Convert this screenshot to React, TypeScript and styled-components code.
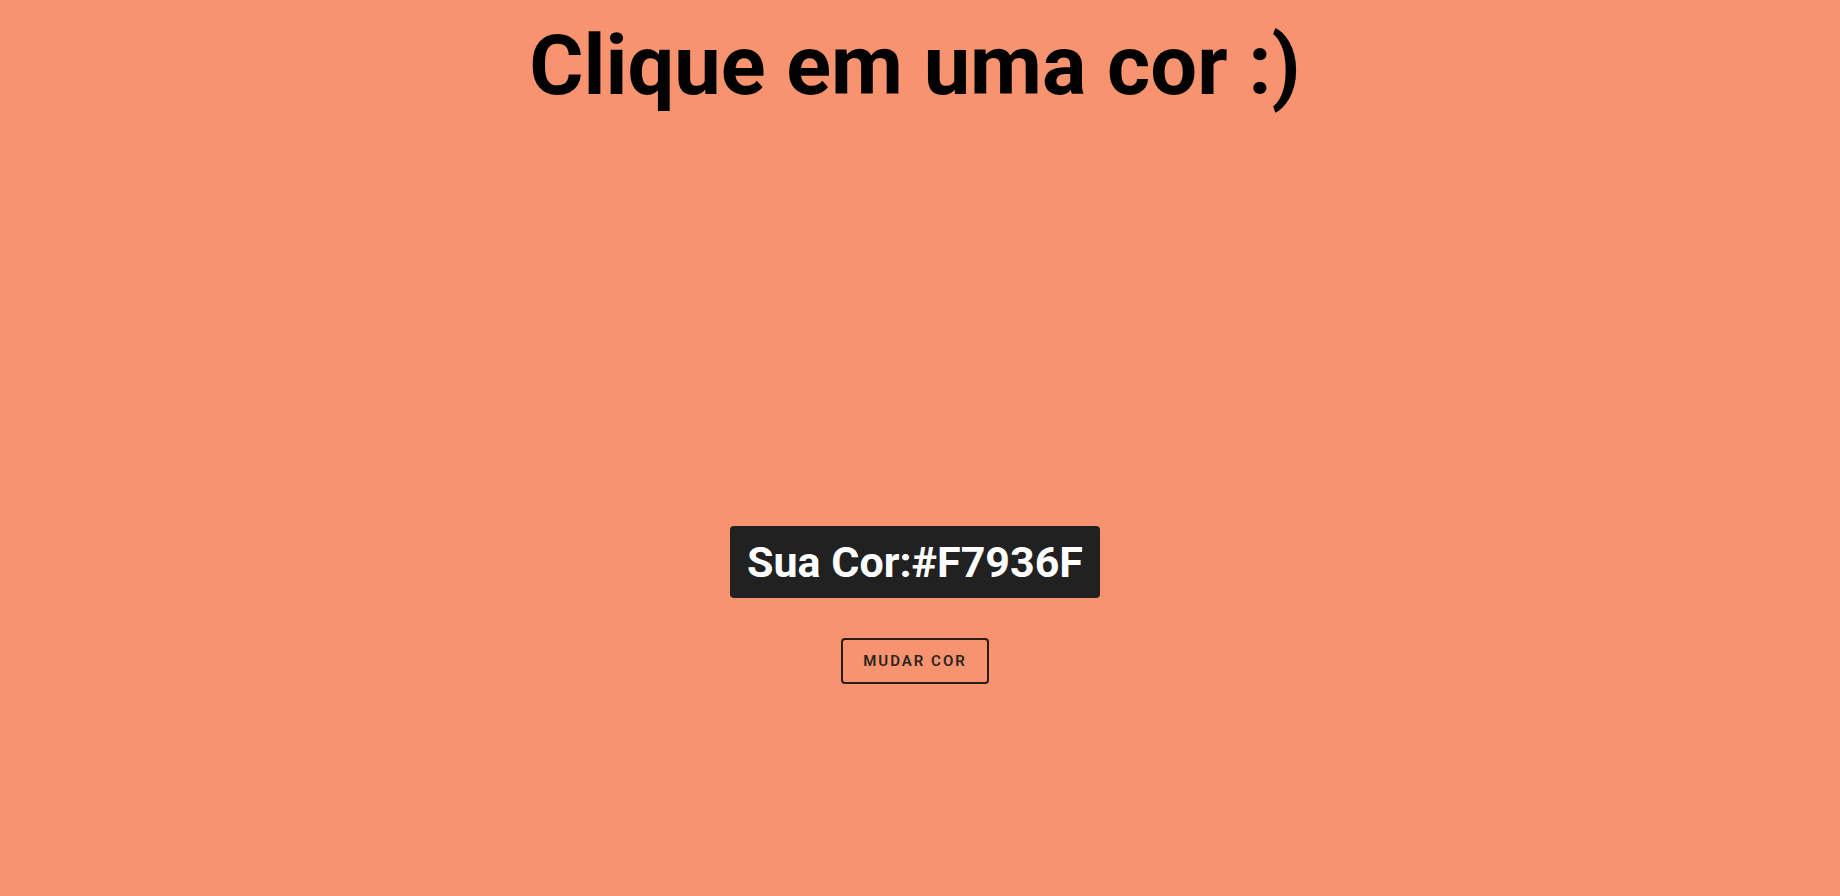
import React from "react";
import styled, { createGlobalStyle } from "styled-components";

const Global = createGlobalStyle`
  html, body { margin: 0; padding: 0; }
  body { background: #F7936F; font-family: Roboto, "Liberation Sans", sans-serif; }
`;

const Page = styled.div`
  min-height: 896px;
  box-sizing: border-box;
  padding-right: 10px;
  display: flex;
  flex-direction: column;
  align-items: center;
`;

const Title = styled.h1`
  margin: 24px 0 0;
  font-family: Roboto, "Liberation Sans", sans-serif;
  font-weight: 700;
  font-size: 83px;
  line-height: 1;
  color: #000;
`;

const Badge = styled.div`
  margin-top: 419px;
  background: #212121;
  color: #fff;
  border-radius: 4px;
  padding: 0 17px;
  height: 72px;
  display: flex;
  align-items: center;
  font-family: Roboto, "Liberation Sans", sans-serif;
  font-weight: 700;
  font-size: 43px;
`;

const Button = styled.button`
  margin-top: 40px;
  width: 148px;
  height: 46px;
  background: transparent;
  border: 2px solid #2a1c17;
  border-radius: 4px;
  color: #2a2420;
  font-family: Roboto, "Liberation Sans", sans-serif;
  font-weight: 600;
  font-size: 15px;
  letter-spacing: 2px;
  text-transform: uppercase;
  cursor: pointer;
`;

export default function App() {
  return (
    <>
      <Global />
      <Page>
        <Title>Clique em uma cor :)</Title>
        <Badge>Sua Cor:#F7936F</Badge>
        <Button>Mudar cor</Button>
      </Page>
    </>
  );
}
